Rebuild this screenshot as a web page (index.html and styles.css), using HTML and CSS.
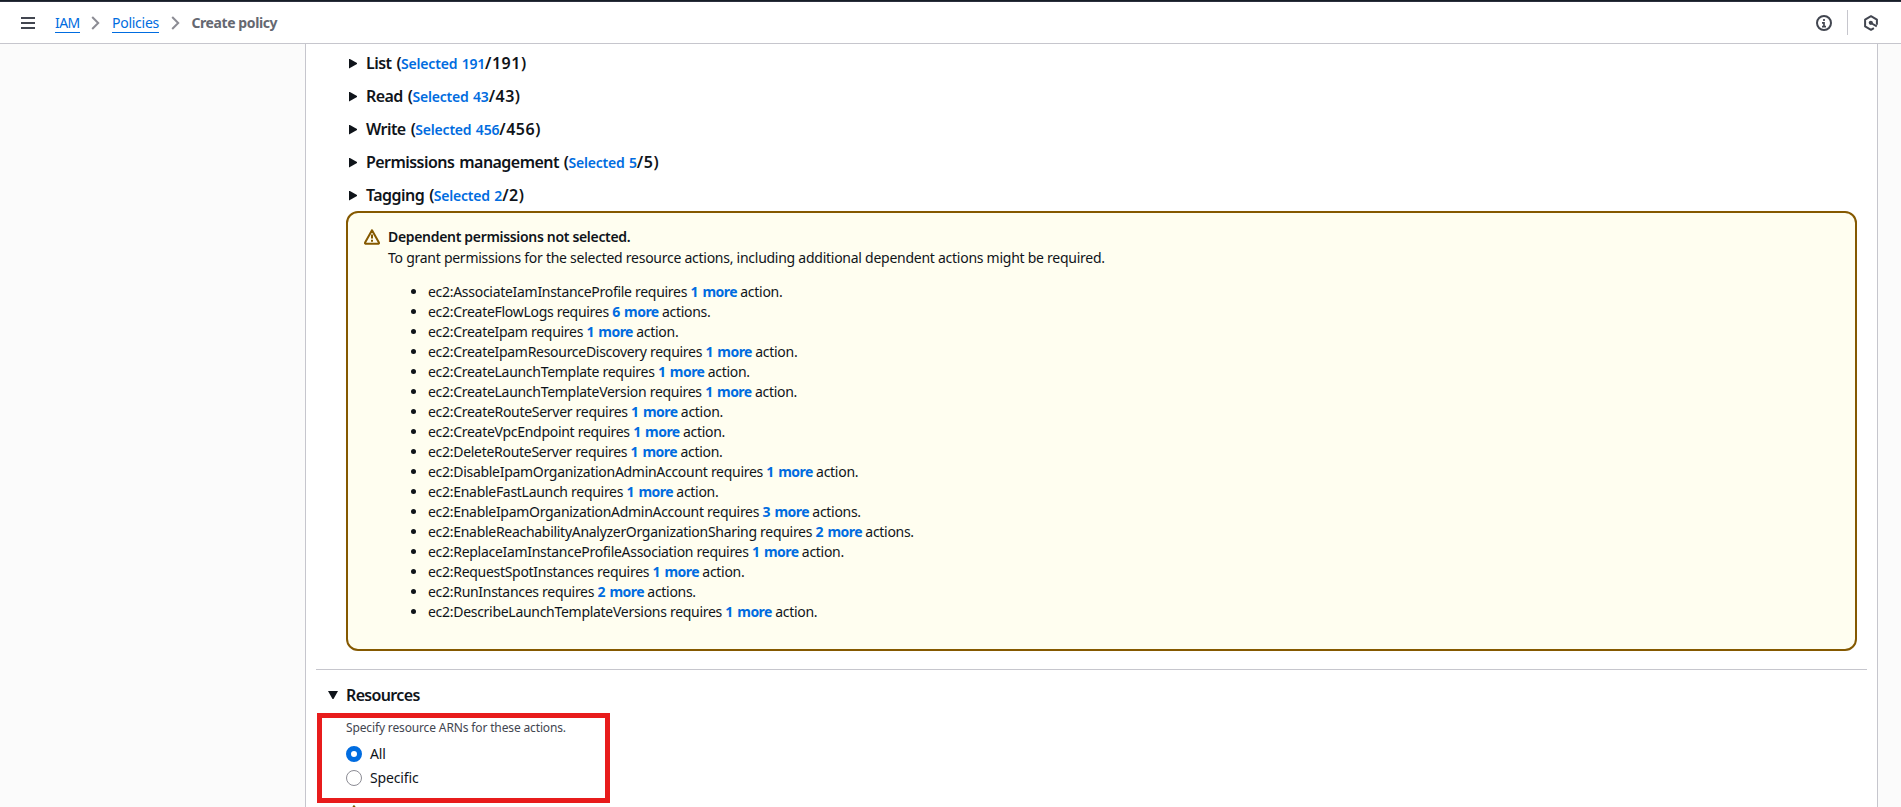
FILE: index.html
```
<!DOCTYPE html>
<html lang="en">
<head>
<meta charset="utf-8">
<title>Create policy</title>
<link rel="stylesheet" href="styles.css">
</head>
<body>
<div class="topbar"></div>
<header class="header">
  <svg class="menu" width="14" height="12" viewBox="0 0 14 12"><path d="M0 1h14M0 6h14M0 11h14" stroke="#424650" stroke-width="2"/></svg>
  <nav class="crumbs">
    <a class="crumb crumb-iam">IAM</a>
    <svg class="chev" width="9" height="14" viewBox="0 0 9 14"><path d="M1.2 1l6 6-6 6" fill="none" stroke="#8c8c94" stroke-width="2"/></svg>
    <a class="crumb">Policies</a>
    <svg class="chev" width="9" height="14" viewBox="0 0 9 14"><path d="M1.2 1l6 6-6 6" fill="none" stroke="#8c8c94" stroke-width="2"/></svg>
    <span class="current">Create policy</span>
  </nav>
  <div class="tools">
    <svg width="16" height="16" viewBox="0 0 16 16"><circle cx="8" cy="8" r="7" fill="none" stroke="#424650" stroke-width="2"/><path d="M8 4v2M6 7.9h2V12M6 11.6h4" fill="none" stroke="#424650" stroke-width="1.7"/></svg>
    <span class="tools-sep"></span>
    <svg width="16" height="16" viewBox="0 0 16 16"><path d="M13.9 9.8V4.6L8 1.2 2.1 4.6v6.8L8 14.8l2.9-1.7" fill="none" stroke="#424650" stroke-width="2" stroke-linejoin="round"/><circle cx="7.8" cy="7.8" r="2.1" fill="#424650"/><path d="M8 8l5.8 3.4" stroke="#424650" stroke-width="2"/></svg>
  </div>
</header>
<div class="layout">
  <aside class="side"></aside>
  <main class="main">
    <div class="levels">
      <div class="level"><i class="tri"></i><span>List (<a class="sel">Selected 191</a><span class="tot">/191)</span></span></div>
      <div class="level"><i class="tri"></i><span>Read (<a class="sel">Selected 43</a><span class="tot">/43)</span></span></div>
      <div class="level"><i class="tri"></i><span>Write (<a class="sel">Selected 456</a><span class="tot">/456)</span></span></div>
      <div class="level"><i class="tri"></i><span>Permissions management (<a class="sel">Selected 5</a><span class="tot">/5)</span></span></div>
      <div class="level"><i class="tri"></i><span>Tagging (<a class="sel">Selected 2</a><span class="tot">/2)</span></span></div>
    </div>
    <section class="alert">
      <svg class="warn" width="16" height="16" viewBox="0 0 16 16"><path d="M8 1.2L1.1 13.6q-.4.9.5 1.2h12.8q.9-.3.5-1.2z" fill="none" stroke="#855900" stroke-width="2" stroke-linejoin="round"/><path d="M8 5.5v4M8 10.7v2" stroke="#855900" stroke-width="2"/></svg>
      <div class="alert-body">
        <div class="alert-title">Dependent permissions not selected.</div>
        <div class="alert-text">To grant permissions for the selected resource actions, including additional dependent actions might be required.</div>
        <ul class="deps">
          <li>ec2:AssociateIamInstanceProfile requires <a>1 more</a> action.</li>
          <li>ec2:CreateFlowLogs requires <a>6 more</a> actions.</li>
          <li>ec2:CreateIpam requires <a>1 more</a> action.</li>
          <li>ec2:CreateIpamResourceDiscovery requires <a>1 more</a> action.</li>
          <li>ec2:CreateLaunchTemplate requires <a>1 more</a> action.</li>
          <li>ec2:CreateLaunchTemplateVersion requires <a>1 more</a> action.</li>
          <li>ec2:CreateRouteServer requires <a>1 more</a> action.</li>
          <li>ec2:CreateVpcEndpoint requires <a>1 more</a> action.</li>
          <li>ec2:DeleteRouteServer requires <a>1 more</a> action.</li>
          <li>ec2:DisableIpamOrganizationAdminAccount requires <a>1 more</a> action.</li>
          <li>ec2:EnableFastLaunch requires <a>1 more</a> action.</li>
          <li>ec2:EnableIpamOrganizationAdminAccount requires <a>3 more</a> actions.</li>
          <li>ec2:EnableReachabilityAnalyzerOrganizationSharing requires <a>2 more</a> actions.</li>
          <li>ec2:ReplaceIamInstanceProfileAssociation requires <a>1 more</a> action.</li>
          <li>ec2:RequestSpotInstances requires <a>1 more</a> action.</li>
          <li>ec2:RunInstances requires <a>2 more</a> actions.</li>
          <li>ec2:DescribeLaunchTemplateVersions requires <a>1 more</a> action.</li>
        </ul>
      </div>
    </section>
    <hr class="rule">
    <div class="res-head"><i class="tri-down"></i><span>Resources</span></div>
    <div class="res-body">
      <div class="hint">Specify resource ARNs for these actions.</div>
      <label class="radio"><i class="dot on"></i><span>All</span></label>
      <label class="radio"><i class="dot"></i><span>Specific</span></label>
      <svg class="warn-next" width="16" height="16" viewBox="0 0 16 16"><path d="M8 1.2L1.1 13.6q-.4.9.5 1.2h12.8q.9-.3.5-1.2z" fill="none" stroke="#855900" stroke-width="2" stroke-linejoin="round"/></svg>
      <div class="mark"></div>
    </div>
  </main>
  <aside class="edge"></aside>
</div>
</body>
</html>
```
FILE: styles.css
```
* { box-sizing: border-box; }
body {
  margin: 0;
  height: 807px;
  overflow: hidden;
  display: flex;
  flex-direction: column;
  background: #fff;
  color: #0f141a;
  font: 14px/20px "Noto Sans", "Open Sans", sans-serif;
  letter-spacing: -0.26px;
}
i { display: block; flex: none; }
svg { display: block; flex: none; }
a { color: #006ce0; }

.topbar { height: 2px; flex: none; background: linear-gradient(#161d26 1px, #2b2f3d 1px); }
.header {
  height: 42px;
  flex: none;
  display: flex;
  align-items: center;
  padding: 0 22px 0 21px;
  border-bottom: 1px solid #c6c6cd;
}
.crumbs { display: flex; align-items: center; margin-left: 20px; }
.crumb { line-height: 19px; height: 20px; border-bottom: 1px solid #006ce0; }
.crumb-iam { letter-spacing: -0.6px; }
.chev { margin: 0 11.7px; }
.current { color: #656871; font-weight: 700; letter-spacing: -0.4px; }
.tools { display: flex; align-items: center; margin-left: auto; }
.tools-sep { width: 1px; height: 25px; background: #c6c6cd; margin: 0 15px; }

.layout { flex: 1; min-height: 0; display: flex; }
.side { width: 306px; background: #fbfbfb; border-right: 1px solid #c6c6cd; }
.main { flex: 1; min-width: 0; }
.edge { width: 24px; background: #fbfbfb; border-left: 1px solid #c6c6cd; }

.levels { height: 167px; padding: 3px 0 0 43px; }
.level {
  height: 33px;
  display: flex;
  align-items: center;
  gap: 9px;
  font-size: 16px;
  font-weight: 600;
  letter-spacing: -0.55px;
  word-spacing: 1.4px;
}
.tri {
  width: 8px;
  height: 10px;
  background: #0f141a;
  clip-path: polygon(0 0, 100% 45%, 100% 55%, 0 100%);
}
.sel { font-size: 14px; font-weight: 600; letter-spacing: -0.2px; word-spacing: 1px; }
.tot { letter-spacing: 0.5px; }

.alert {
  margin: 0 20px 0 40px;
  height: 440px;
  padding: 14px 16px;
  display: flex;
  gap: 8px;
  border: 2px solid #855900;
  border-radius: 12px;
  background: #fffef0;
}
.warn { margin-top: 2px; }
.alert-title { height: 21px; font-weight: 600; letter-spacing: -0.32px; }
.deps { margin: 14px 0 0; padding: 0 0 0 40px; }
.deps li { letter-spacing: -0.29px; }
.deps li::marker { letter-spacing: 0; }
.deps a { font-weight: 700; letter-spacing: -0.55px; word-spacing: 1.4px; }

.rule { margin: 18px 10px 0; border: 0; height: 1px; background: #c6c6cd; }
.res-head {
  display: flex;
  align-items: center;
  gap: 8px;
  margin: 15px 0 0 22px;
  font-size: 16px;
  font-weight: 600;
  letter-spacing: -0.65px;
}
.tri-down {
  width: 10px;
  height: 8px;
  background: #0f141a;
  clip-path: polygon(0 0, 100% 0, 55% 100%, 45% 100%);
}
.res-body { position: relative; padding: 13px 0 0 40px; }
.hint { height: 20px; font-size: 12px; color: #424650; letter-spacing: -0.14px; }
.radio { display: flex; align-items: center; gap: 8px; height: 20px; margin-top: 6px; letter-spacing: -0.15px; }
.radio + .radio { margin-top: 4px; }
.dot { width: 16px; height: 16px; border: 1px solid #8c8c94; border-radius: 50%; }
.dot.on { border: 5px solid #006ce0; }
.warn-next { margin-top: 17px; }
.mark {
  position: absolute;
  left: 11px;
  top: 8px;
  width: 293px;
  height: 90px;
  border: 5px solid #e81c1c;
}
```
